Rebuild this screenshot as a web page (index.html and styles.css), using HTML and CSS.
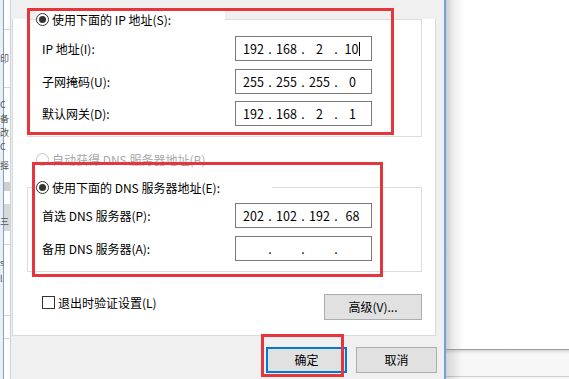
FILE: index.html
```html
<!DOCTYPE html>
<html lang="zh-CN">
<head>
    <meta charset="UTF-8">
    <title>Internet 协议版本 4 (TCP/IPv4) 属性</title>
    <link rel="stylesheet" href="styles.css">
</head>
<body>
    <div class="screen">
        <!-- window behind, left edge -->
        <div class="behind-left">
            <div class="bl-line bl-l1"></div>
            <span class="bl-glyph bl-g1">印</span>
            <div class="bl-line bl-l2"></div>
            <span class="bl-glyph bl-g2">C</span>
            <span class="bl-glyph bl-g3">备</span>
            <span class="bl-glyph bl-g3">改</span>
            <span class="bl-glyph bl-g3">C</span>
            <span class="bl-glyph bl-g4">择</span>
            <div class="bl-block bl-b1"></div>
            <div class="bl-block bl-b2"><span class="bl-glyph">三</span></div>
            <div class="bl-line bl-l3"></div>
            <span class="bl-glyph bl-g5">s</span>
            <span class="bl-glyph bl-g6">l</span>
            <div class="bl-line bl-l4"></div>
            <div class="bl-line bl-l5"></div>
        </div>

        <div class="dialog">
            <div class="panel">
                <div class="group group-ip">
                    <label class="group-head"><span class="radio checked"></span>使用下面的 IP 地址(S):</label>
                    <div class="rows">
                        <div class="row">
                            <span class="row-label">IP 地址(I):</span>
                            <div class="ip-box">
                                <span class="seg">192</span><span class="dot">.</span>
                                <span class="seg">168</span><span class="dot">.</span>
                                <span class="seg">2</span><span class="dot">.</span>
                                <span class="seg">10<i class="caret"></i></span>
                            </div>
                        </div>
                        <div class="row">
                            <span class="row-label">子网掩码(U):</span>
                            <div class="ip-box">
                                <span class="seg">255</span><span class="dot">.</span>
                                <span class="seg">255</span><span class="dot">.</span>
                                <span class="seg">255</span><span class="dot">.</span>
                                <span class="seg">0</span>
                            </div>
                        </div>
                        <div class="row">
                            <span class="row-label">默认网关(D):</span>
                            <div class="ip-box">
                                <span class="seg">192</span><span class="dot">.</span>
                                <span class="seg">168</span><span class="dot">.</span>
                                <span class="seg">2</span><span class="dot">.</span>
                                <span class="seg">1</span>
                            </div>
                        </div>
                    </div>
                </div>

                <label class="radio-row disabled"><span class="radio"></span>自动获得 DNS 服务器地址(B)</label>

                <div class="group group-dns">
                    <label class="group-head"><span class="radio checked"></span>使用下面的 DNS 服务器地址(E):</label>
                    <div class="rows">
                        <div class="row">
                            <span class="row-label">首选 DNS 服务器(P):</span>
                            <div class="ip-box">
                                <span class="seg">202</span><span class="dot">.</span>
                                <span class="seg">102</span><span class="dot">.</span>
                                <span class="seg">192</span><span class="dot">.</span>
                                <span class="seg">68</span>
                            </div>
                        </div>
                        <div class="row">
                            <span class="row-label">备用 DNS 服务器(A):</span>
                            <div class="ip-box">
                                <span class="seg"></span><span class="dot">.</span>
                                <span class="seg"></span><span class="dot">.</span>
                                <span class="seg"></span><span class="dot">.</span>
                                <span class="seg"></span>
                            </div>
                        </div>
                    </div>
                </div>

                <div class="panel-foot">
                    <label class="check-row"><span class="checkbox"></span>退出时验证设置(L)</label>
                    <button class="btn btn-adv">高级(V)...</button>
                </div>
            </div>

            <div class="dialog-buttons">
                <button class="btn btn-default">确定</button>
                <button class="btn">取消</button>
            </div>
        </div>

        <!-- window behind, right side -->
        <div class="behind-right">
            <div class="br-top"></div>
            <div class="br-line"></div>
            <div class="br-bottom"></div>
        </div>

        <!-- red annotation boxes -->
        <div class="mark mark-ip"></div>
        <div class="mark mark-dns"></div>
        <div class="mark mark-ok"></div>
    </div>
</body>
</html>
```

FILE: styles.css
```css
* {
    box-sizing: border-box;
}
body {
    margin: 0;
    font-family: "Noto Sans CJK SC", "Noto Sans", sans-serif;
    font-size: 12px;
    color: #000;
    background: #fff;
}
.screen {
    position: relative;
    display: flex;
    width: 569px;
    height: 379px;
    overflow: hidden;
}

/* left sliver of the window behind */
.behind-left {
    width: 10px;
    flex: none;
    display: flex;
    flex-direction: column;
    align-items: flex-start;
    padding-left: 4px;
    overflow: hidden;
    background: linear-gradient(to right, #eceff2 0, #eceff2 3px, #74a5d8 3px, #74a5d8 4px, #fff 4px);
}
.bl-line {
    width: 6px;
    height: 1px;
    flex: none;
    background: #d6d6d6;
}
.bl-l1 { margin-top: 29px; }
.bl-l2 { margin-top: 22px; }
.bl-l3 { margin-top: 13px; }
.bl-l4 { margin-top: 30px; }
.bl-l5 { margin-top: 22px; }
.bl-glyph {
    font-size: 9px;
    line-height: 13px;
    height: 13px;
    color: #555;
    margin-left: -4px;
    flex: none;
    overflow: hidden;
}
.bl-g1 { margin-top: 22px; }
.bl-g2 { margin-top: 10px; }
.bl-g3 { margin-top: 1px; }
.bl-g4 { margin-top: 6px; }
.bl-g5 { margin-top: 11px; }
.bl-g6 { margin-top: 3px; }
.bl-block {
    width: 6px;
    flex: none;
    background: #cfcfcf;
}
.bl-b1 { height: 9px; margin-top: 10px; }
.bl-b2 { height: 27px; margin-top: 13px; background: #d8d8d8; padding-top: 7px; }

/* dialog */
.dialog {
    width: 436px;
    flex: none;
    background: #f0f0f0;
    border-left: 1px solid #c6d3e0;
    border-right: 2px solid #6ea2d8;
    padding: 0 7px 0 1px;
}
.panel {
    width: 424px;
    background: #fff;
    border: 1px solid #d9d9d9;
    border-top: none;
    padding: 0 0 15px 0;
}
.group {
    margin-left: 14px;
    width: 395px;
    border: 1px solid #dcdcdc;
    padding-bottom: 10px;
}
.group-ip {
    margin-top: 19px;
}
.group-dns {
    margin-top: 19px;
}
.group-head {
    display: flex;
    align-items: center;
    gap: 3px;
    width: 189px;
    height: 17px;
    margin: -9px 0 0 8px;
    background: #fff;
}
.group-dns .group-head {
    width: 236px;
}
.rows {
    display: flex;
    flex-direction: column;
    gap: 7.5px;
    padding: 8px 0 0 14px;
}
.group-dns .rows {
    gap: 8px;
    padding-top: 7px;
}
.row {
    display: flex;
    align-items: center;
    height: 25px;
}
.row-label {
    width: 193px;
}
.ip-box {
    display: flex;
    align-items: center;
    width: 137px;
    height: 25px;
    border: 1px solid #7a7a7a;
    padding-left: 4px;
    font-size: 12.5px;
}
.seg {
    width: 27px;
    text-align: center;
}
.dot {
    width: 6px;
    text-align: center;
}
.caret {
    display: inline-block;
    width: 1px;
    height: 14px;
    margin-left: 1px;
    vertical-align: -2px;
    background: #000;
}

.radio {
    display: inline-flex;
    align-items: center;
    justify-content: center;
    width: 13px;
    height: 13px;
    flex: none;
    border: 1px solid #333;
    border-radius: 50%;
    background: #fff;
}
.radio.checked::after {
    content: "";
    width: 7px;
    height: 7px;
    border-radius: 50%;
    background: #333;
}
.radio-row {
    display: flex;
    align-items: center;
    gap: 3px;
    height: 17px;
    margin: 13.5px 0 0 23px;
}
.radio-row.disabled {
    color: #a8a8a8;
}
.radio-row.disabled .radio {
    border-color: #c4c4c4;
}

.panel-foot {
    display: flex;
    justify-content: space-between;
    align-items: flex-start;
    margin: 22px 0 0 14px;
    width: 395px;
    padding-left: 15px;
}
.check-row {
    display: flex;
    align-items: center;
    gap: 3px;
    height: 17px;
}
.checkbox {
    width: 13px;
    height: 13px;
    border: 1px solid #333;
    background: #fff;
}

.btn {
    font-family: inherit;
    font-size: 12px;
    color: #000;
    background: #e1e1e1;
    border: 1px solid #adadad;
    padding: 0;
    height: 26px;
}
.btn-adv {
    width: 98px;
}
.dialog-buttons {
    display: flex;
    justify-content: flex-end;
    gap: 9px;
    padding-top: 11px;
}
.dialog-buttons .btn {
    width: 81px;
}
.btn-default {
    border-color: #0078d7;
    box-shadow: inset 0 0 0 1px #0078d7;
}

/* window behind, right side */
.behind-right {
    flex: 1;
    display: flex;
    flex-direction: column;
    background: linear-gradient(to right, #cdcdcd 0, #ececec 7px, #fff 18px);
}
.br-top {
    height: 349px;
}
.br-line {
    height: 1px;
    background: #9c9c9c;
}
.br-bottom {
    flex: 1;
    background:
        linear-gradient(to right, rgba(0, 0, 0, 0.14) 0, rgba(0, 0, 0, 0) 16px),
        linear-gradient(#d8d8d8 0, #f7f7f7 4px, #f7f7f7 26px, #cfcfcf 26px, #cfcfcf 27px, #f7f7f7 27px);
}

/* red annotation boxes */
.mark {
    position: absolute;
    border: 3px solid #e5353d;
}
.mark-ip {
    left: 27px;
    top: 8px;
    width: 367px;
    height: 127px;
}
.mark-dns {
    left: 32px;
    top: 162px;
    width: 351px;
    height: 115px;
}
.mark-ok {
    left: 261px;
    top: 334px;
    width: 83px;
    height: 43px;
}
```
